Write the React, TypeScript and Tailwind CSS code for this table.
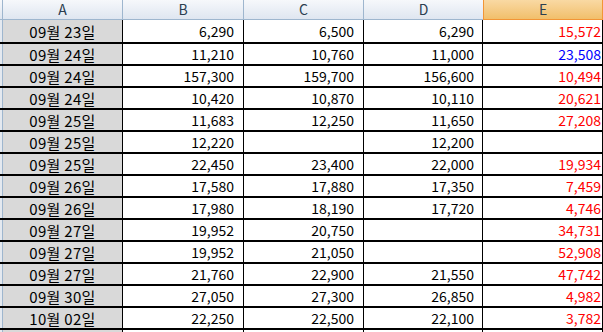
import React from "react";

type Row = { d: string; b: string; c: string; dd: string; e: string; blue?: boolean };

const rows: Row[] = [
  { d: "09월 23일", b: "6,290", c: "6,500", dd: "6,290", e: "15,572" },
  { d: "09월 24일", b: "11,210", c: "10,760", dd: "11,000", e: "23,508", blue: true },
  { d: "09월 24일", b: "157,300", c: "159,700", dd: "156,600", e: "10,494" },
  { d: "09월 24일", b: "10,420", c: "10,870", dd: "10,110", e: "20,621" },
  { d: "09월 25일", b: "11,683", c: "12,250", dd: "11,650", e: "27,208" },
  { d: "09월 25일", b: "12,220", c: "", dd: "12,200", e: "" },
  { d: "09월 25일", b: "22,450", c: "23,400", dd: "22,000", e: "19,934" },
  { d: "09월 26일", b: "17,580", c: "17,880", dd: "17,350", e: "7,459" },
  { d: "09월 26일", b: "17,980", c: "18,190", dd: "17,720", e: "4,746" },
  { d: "09월 27일", b: "19,952", c: "20,750", dd: "", e: "34,731" },
  { d: "09월 27일", b: "19,952", c: "21,050", dd: "", e: "52,908" },
  { d: "09월 27일", b: "21,760", c: "22,900", dd: "21,550", e: "47,742" },
  { d: "09월 30일", b: "27,050", c: "27,300", dd: "26,850", e: "4,982" },
  { d: "10월 02일", b: "22,250", c: "22,500", dd: "22,100", e: "3,782" },
  { d: "", b: "", c: "", dd: "", e: "" },
];

export default function App() {
  return (
    <div
      className="w-[603px] h-[332px] overflow-hidden bg-white text-[14px] text-black"
      style={{ fontFamily: '"Noto Sans CJK KR", "Noto Sans", sans-serif' }}
    >
      <div className="w-[640px]">
        {/* header */}
        <div className="flex h-[20px] text-[14px] text-[#2c3e50]">
          <div className="w-[3px] border-r border-b border-[#9eb6ce] bg-gradient-to-b from-[#f6f8fb] to-[#dfe6f0]" />
          <div className="w-[120px] flex items-center justify-center border-r border-b border-[#9eb6ce] bg-gradient-to-b from-[#f6f8fb] to-[#dfe6f0]">A</div>
          <div className="w-[121px] flex items-center justify-center border-r border-b border-[#9eb6ce] bg-gradient-to-b from-[#f6f8fb] to-[#dfe6f0]">B</div>
          <div className="w-[120px] flex items-center justify-center border-r border-b border-[#9eb6ce] bg-gradient-to-b from-[#f6f8fb] to-[#dfe6f0]">C</div>
          <div className="w-[119px] flex items-center justify-center border-b border-[#9eb6ce] bg-gradient-to-b from-[#f6f8fb] to-[#dfe6f0]">D</div>
          <div className="w-[120px] flex items-center justify-center border-l border-r border-b border-[#f29536] bg-gradient-to-b from-[#f9d9a3] to-[#f1bf6a]">E</div>
          <div className="flex-1 border-b border-[#9eb6ce] bg-gradient-to-b from-[#f6f8fb] to-[#dfe6f0]" />
        </div>
        {rows.map((r, i) => (
          <div
            key={i}
            className={`flex border-b-2 border-black leading-none ${i === 0 ? "h-[24px]" : "h-[22px]"}`}
          >
            <div className="w-[3px] border-r border-[#9eb6ce] bg-[#e4e9f0]" />
            <div className="w-[120px] flex items-center justify-center border-r border-black bg-[#d9d9d9] text-[15px] tracking-[0.3px]">{r.d}</div>
            <div className="w-[121px] flex items-center justify-end pr-[9px] border-r border-black">{r.b}</div>
            <div className="w-[120px] flex items-center justify-end pr-[9px] border-r border-black">{r.c}</div>
            <div className="w-[119px] flex items-center justify-end pr-[8px] border-r border-black">{r.dd}</div>
            <div className={`w-[120px] flex items-center justify-end pr-[1px] border-r border-black ${r.blue ? "text-[#0000ff]" : "text-[#ff0000]"}`}>{r.e}</div>
            <div className="flex-1" />
          </div>
        ))}
      </div>
    </div>
  );
}
